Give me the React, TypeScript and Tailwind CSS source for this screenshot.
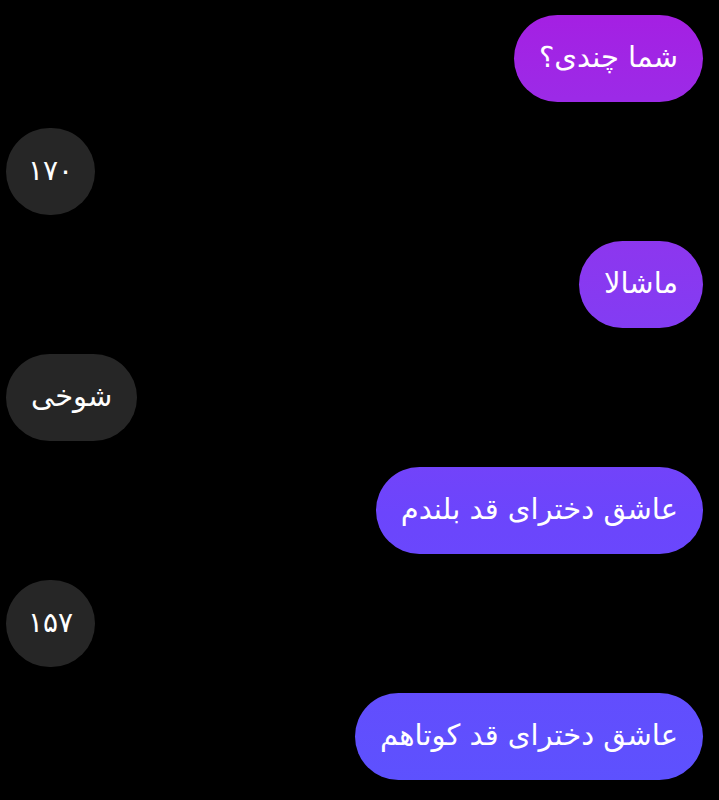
const messages: { text: string; mine: boolean; num?: boolean }[] = [
  { text: "شما چندی؟", mine: true },
  { text: "۱۷۰", mine: false, num: true },
  { text: "ماشالا", mine: true },
  { text: "شوخی", mine: false },
  { text: "عاشق دخترای قد بلندم", mine: true },
  { text: "۱۵۷", mine: false, num: true },
  { text: "عاشق دخترای قد کوتاهم", mine: true },
];

export default function App() {
  return (
    <div
      dir="rtl"
      className="flex h-[800px] w-full flex-col gap-[26px] overflow-hidden bg-black pl-[6px] pr-4 pt-[15px]"
      style={{ fontFamily: '"DejaVu Sans", "Noto Sans", sans-serif' }}
    >
      {messages.map((m, i) => (
        <div key={i} className={m.mine ? "flex justify-start" : "flex justify-end"}>
          <div
            className={
              m.mine
                ? "flex h-[87px] min-w-[87px] items-center justify-center rounded-full bg-fixed bg-linear-to-b from-[#a61de2] via-[#6c45fc] via-64% to-[#5c52fe] px-[25px] pb-[2px] text-[29px] text-white"
                : m.num
                  ? "flex h-[87px] min-w-[87px] items-center justify-center rounded-full bg-[#262626] px-[22px] pb-[2px] text-[28px] tracking-[-2px] text-white"
                  : "flex h-[87px] min-w-[87px] items-center justify-center rounded-full bg-[#262626] px-[25px] pb-[2px] text-[29px] text-white"
            }
          >
            {m.text}
          </div>
        </div>
      ))}
    </div>
  );
}
